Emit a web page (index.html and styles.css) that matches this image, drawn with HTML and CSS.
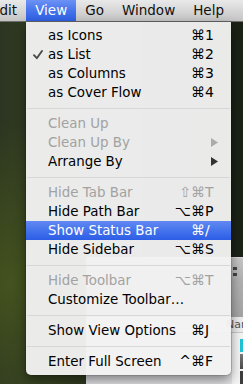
FILE: index.html
```html
<!DOCTYPE html>
<html>
<head>
<meta charset="utf-8">
<link rel="stylesheet" href="styles.css">
</head>
<body>
<div class="screen">
  <div class="menubar">
    <span class="mb-item mb-first">Edit</span>
    <span class="mb-item mb-active">View</span>
    <span class="mb-item">Go</span>
    <span class="mb-item">Window</span>
    <span class="mb-item">Help</span>
  </div>
  <div class="desktop">
    <div class="window">
      <div class="win-toolbar"><span class="view-icon"></span></div>
      <div class="win-header">Name</div>
      <div class="win-body">
        <div class="win-sidebar"><span class="side-icon"></span><span class="side-mark"></span></div>
        <div class="win-list">
          <div class="thumb thumb-cyan"></div>
          <div class="thumb thumb-photo"></div>
          <div class="thumb thumb-dark"></div>
        </div>
      </div>
    </div>
  </div>

  <div class="menu">
    <div class="row"><span class="chk"></span><span class="lbl">as Icons</span><span class="mods">⌘</span><span class="key">1</span></div>
    <div class="row"><span class="chk"><svg width="10" height="10" viewBox="0 0 10 10"><path d="M1 5.2 L3.8 8.2 L9 1" fill="none" stroke="#4a4a4a" stroke-width="1.9" stroke-linecap="round" stroke-linejoin="round"/></svg></span><span class="lbl">as List</span><span class="mods">⌘</span><span class="key">2</span></div>
    <div class="row"><span class="chk"></span><span class="lbl">as Columns</span><span class="mods">⌘</span><span class="key">3</span></div>
    <div class="row"><span class="chk"></span><span class="lbl">as Cover Flow</span><span class="mods">⌘</span><span class="key">4</span></div>
    <div class="sep"></div>
    <div class="row dis"><span class="chk"></span><span class="lbl">Clean Up</span><span class="mods"></span><span class="key"></span></div>
    <div class="row dis"><span class="chk"></span><span class="lbl">Clean Up By</span><span class="mods"></span><span class="key arrow"><svg width="7" height="9" viewBox="0 0 7 9"><path d="M0 0 L7 4.5 L0 9 Z" fill="#ababab"/></svg></span></div>
    <div class="row"><span class="chk"></span><span class="lbl">Arrange By</span><span class="mods"></span><span class="key arrow"><svg width="7" height="9" viewBox="0 0 7 9"><path d="M0 0 L7 4.5 L0 9 Z" fill="#333"/></svg></span></div>
    <div class="sep"></div>
    <div class="row dis"><span class="chk"></span><span class="lbl">Hide Tab Bar</span><span class="mods">⇧⌘</span><span class="key">T</span></div>
    <div class="row"><span class="chk"></span><span class="lbl">Hide Path Bar</span><span class="mods">⌥⌘</span><span class="key">P</span></div>
    <div class="row hl"><span class="chk"></span><span class="lbl">Show Status Bar</span><span class="mods">⌘</span><span class="key">/</span></div>
    <div class="row"><span class="chk"></span><span class="lbl">Hide Sidebar</span><span class="mods">⌥⌘</span><span class="key">S</span></div>
    <div class="sep"></div>
    <div class="row dis"><span class="chk"></span><span class="lbl">Hide Toolbar</span><span class="mods">⌥⌘</span><span class="key">T</span></div>
    <div class="row"><span class="chk"></span><span class="lbl">Customize Toolbar…</span><span class="mods"></span><span class="key"></span></div>
    <div class="sep"></div>
    <div class="row"><span class="chk"></span><span class="lbl">Show View Options</span><span class="mods">⌘</span><span class="key">J</span></div>
    <div class="sep"></div>
    <div class="row"><span class="chk"></span><span class="lbl">Enter Full Screen</span><span class="mods">^⌘</span><span class="key">F</span></div>
  </div>
</div>
</body>
</html>
```

FILE: styles.css
```css
* { box-sizing: border-box; }
html, body { margin: 0; padding: 0; }
body {
  width: 243px;
  height: 384px;
  overflow: hidden;
  font-family: "DejaVu Sans", "Liberation Sans", sans-serif;
  background: #222;
}
.screen {
  position: relative;
  width: 243px;
  height: 384px;
  overflow: hidden;
  display: flex;
  flex-direction: column;
}
.menubar {
  height: 22px;
  flex: none;
  display: flex;
  align-items: stretch;
  background: linear-gradient(#e9e9e9, #d3d3d3 60%, #c4c4c4);
  border-bottom: 1px solid #6f6f6f;
  font-size: 13.5px;
  color: #111;
  white-space: nowrap;
}
.mb-item {
  padding: 0 9px;
  line-height: 21px;
}
.mb-first { margin-left: -18px; }
.mb-active {
  color: #fff;
  background: linear-gradient(#6d92f4, #4674ec 50%, #2f5fe4);
}
.desktop {
  flex: 1;
  position: relative;
  background:
    radial-gradient(ellipse 120px 160px at 10px 260px, rgba(70,85,30,0.9), rgba(70,85,30,0) 100%),
    linear-gradient(90deg, #2c3521 0%, #313d22 15%, #1b2115 100%);
}
.window {
  position: absolute;
  left: 86px;
  top: 235px;
  width: 200px;
  height: 160px;
  display: flex;
  flex-direction: column;
  background: #e6e6e6;
}
.win-toolbar {
  height: 60px;
  flex: none;
  border-top: 1px solid #d8d8d8;
  background: linear-gradient(#c6c6c6, #b0b0b0 40%, #a4a4a4);
  position: relative;
}
.view-icon {
  position: absolute;
  left: 147px;
  top: 9px;
  width: 4px;
  height: 9px;
  border-top: 3px solid #444;
  border-bottom: 3px solid #444;
}
.win-header {
  height: 16px;
  flex: none;
  background: #ececec;
  border-bottom: 1px solid #c8c8c8;
  font-size: 11px;
  line-height: 15px;
  color: #555;
  padding-left: 140px;
}
.win-body {
  flex: 1;
  display: flex;
}
.win-sidebar {
  width: 146px;
  background: #e3e3e7;
  position: relative;
}
.side-icon {
  position: absolute;
  left: 22px;
  top: 60px;
  width: 6px;
  height: 5px;
  background: #8e8e96;
}
.side-mark {
  position: absolute;
  left: 84px;
  top: 58px;
  width: 2px;
  height: 3px;
  background: #c42a2a;
}
.win-list {
  flex: 1;
  background: #f4f4f4;
  padding-top: 6px;
  padding-left: 8px;
  display: flex;
  flex-direction: column;
  gap: 2px;
}
.thumb { width: 20px; height: 13px; }
.thumb-cyan { background: #1fc4d8; }
.thumb-photo { height: 15px; background: linear-gradient(#7a7a7a, #4a4a4a); }
.thumb-dark { height: 16px; background: #3e3e3e; }

.menu {
  position: absolute;
  left: 26px;
  top: 22px;
  width: 205px;
  padding: 4px 0;
  background: rgba(243, 243, 243, 0.96);
  border-radius: 0 0 5px 5px;
  box-shadow: 0 5px 12px rgba(0,0,0,0.45), 0 0 0 1px rgba(0,0,0,0.1);
  font-size: 13.4px;
  color: #000;
  white-space: nowrap;
}
.row {
  height: 19px;
  display: grid;
  grid-template-columns: 22px 1fr auto 12px;
  align-items: center;
  padding-right: 14px;
  line-height: 19px;
}
.chk {
  display: flex;
  align-items: center;
  justify-content: flex-end;
  padding-right: 5px;
  height: 19px;
}
.chk svg { display: block; }
.mods { text-align: right; font-size: 14px; }
.key { text-align: left; font-size: 14px; }
.arrow {
  display: flex;
  justify-content: flex-end;
  align-items: center;
  margin-right: -1px;
}
.arrow svg { display: block; }
.dis { color: #a2a2a2; }
.hl {
  color: #fff;
  background: linear-gradient(#6189f2, #4573ec 50%, #2c5de5);
}
.sep {
  height: 12px;
  margin: 0 1px;
  display: flex;
  flex-direction: column;
  justify-content: center;
}
.sep::before {
  content: "";
  display: block;
  height: 1px;
  background: #d7d7d7;
}
```
